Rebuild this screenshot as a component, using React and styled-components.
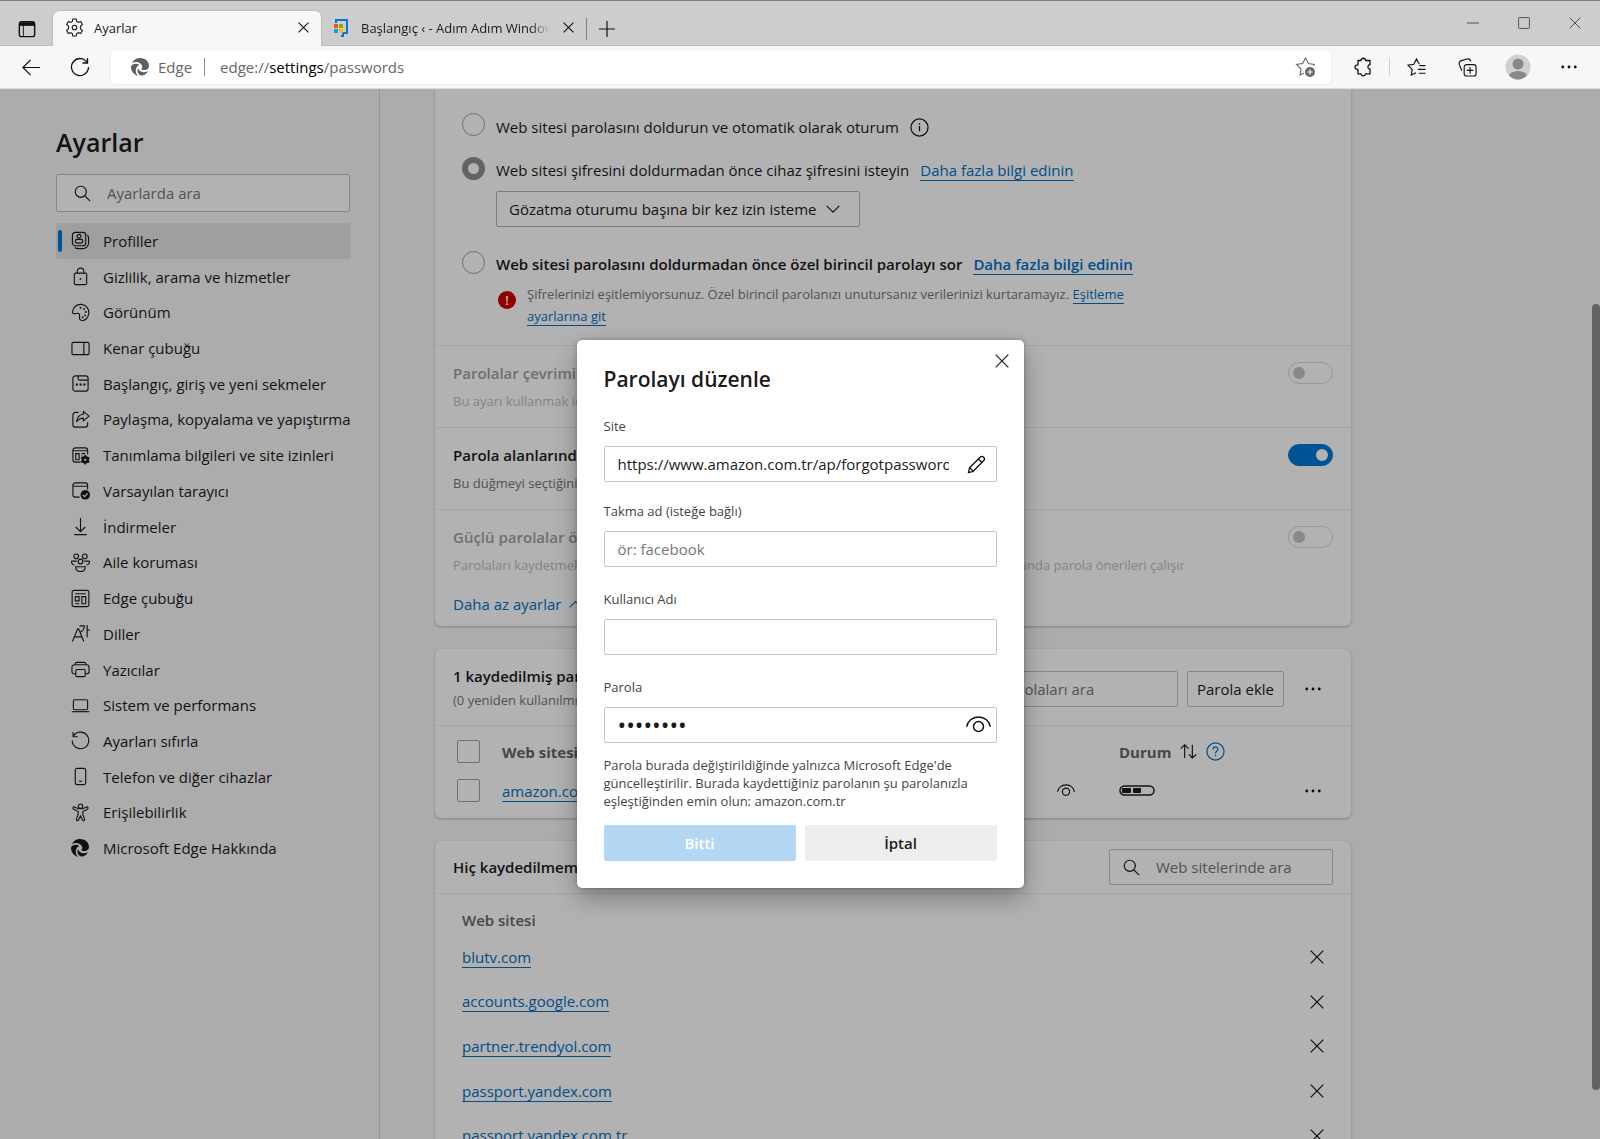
import { useState } from "react";
import styled, { createGlobalStyle, css } from "styled-components";
import { FaEdge } from "react-icons/fa6";

const navItems = [
  { id: "profiles", label: "Profiller" },
  { id: "privacy", label: "Gizlilik, arama ve hizmetler" },
  { id: "appearance", label: "Görünüm" },
  { id: "sidebar", label: "Kenar çubuğu" },
  { id: "start", label: "Başlangıç, giriş ve yeni sekmeler" },
  { id: "share", label: "Paylaşma, kopyalama ve yapıştırma" },
  { id: "cookies", label: "Tanımlama bilgileri ve site izinleri" },
  { id: "browser", label: "Varsayılan tarayıcı" },
  { id: "downloads", label: "İndirmeler" },
  { id: "family", label: "Aile koruması" },
  { id: "edgebar", label: "Edge çubuğu" },
  { id: "languages", label: "Diller" },
  { id: "printers", label: "Yazıcılar" },
  { id: "system", label: "Sistem ve performans" },
  { id: "reset", label: "Ayarları sıfırla" },
  { id: "phone", label: "Telefon ve diğer cihazlar" },
  { id: "accessibility", label: "Erişilebilirlik" },
  { id: "about", label: "Microsoft Edge Hakkında" },
];

const neverSaved = [
  "blutv.com",
  "accounts.google.com",
  "partner.trendyol.com",
  "passport.yandex.com",
  "passport.yandex.com.tr",
];

const navPaths = {
  profiles: (
    <>
      <rect x="1.5" y="1.5" width="14" height="14" rx="3" />
      <circle cx="8.5" cy="5.5" r="2" />
      <rect x="4.5" y="8.8" width="8" height="4" rx="2" />
      <path d="M4 17.3c1 .8 2 1.2 3.500 1.200h5c3.300 0 6-2.700 6-6v-5c0-1.400-.4-2.500-1.200-3.500" />
    </>
  ),
  privacy: (
    <>
      <rect x="3.500" y="6.500" width="13" height="12" rx="1.500" />
      <path d="M6.500 6.500V4.700a3.500 3.500 0 0 1 7 0v1.800" />
      <circle cx="10" cy="12.500" r="1" fill="currentColor" stroke="none" />
    </>
  ),
  appearance: (
    <>
      <path d="M1.500 9.500C2 4.500 6 1 11 1.500c5 .4 8.200 4.500 7.800 9.300-.4 4.700-4 8.200-7.600 7.600-1.800-.3-2.400-1.700-2.200-3.300.3-2 .2-3.300-.9-4-1.400-1-2.800.2-4.200.2-1.500 0-2.600-.6-2.400-1.800z" />
      <g fill="currentColor" stroke="none">
        <circle cx="10" cy="5" r="1" />
        <circle cx="13.700" cy="6.300" r="1" />
        <circle cx="15.500" cy="9.500" r="1" />
        <circle cx="14.800" cy="13" r="1" />
        <circle cx="12.300" cy="15" r="1" />
      </g>
    </>
  ),
  sidebar: (
    <>
      <rect x="1" y="3.500" width="18" height="13" rx="1.500" />
      <path d="M13.500 3.500v13" />
    </>
  ),
  start: (
    <>
      <rect x="2" y="2" width="16" height="16" rx="2.500" />
      <path d="M7.500 2v3c0 .8.400 1.500 1.500 1.500h9" />
      <g fill="currentColor" stroke="none">
        <rect x="5" y="10" width="2.200" height="2.200" />
        <rect x="9" y="10" width="2.200" height="2.200" />
        <rect x="13" y="10" width="2.200" height="2.200" />
      </g>
    </>
  ),
  share: (
    <>
      <path d="M8 2.500H4.500A2.500 2.500 0 0 0 2 5v10.500A2.500 2.500 0 0 0 4.500 18H15a2.500 2.500 0 0 0 2.500-2.500V13" />
      <path d="M13 1.500l6 5-6 5V8.500c-3 0-5 1.200-7 3.700.4-4 3-7.400 7-7.700z" strokeLinejoin="round" />
    </>
  ),
  cookies: (
    <>
      <path d="M17.500 9V4.500A2.500 2.500 0 0 0 15 2H4.500A2.500 2.500 0 0 0 2 4.500v10A2.500 2.500 0 0 0 4.500 17H10M2 5h15.500" />
      <path d="M5 8h3.500v6.500H5zM11 8h4M11 10.500h1" />
      <circle cx="15" cy="14.500" r="2.700" strokeWidth="2.600" />
      <path d="M15 9.500v10M10.700 12l8.600 5M10.700 17l8.600-5" strokeWidth="1.800" />
      <circle cx="15" cy="14.500" r="1.200" fill="#fff" stroke="none" />
    </>
  ),
  browser: (
    <>
      <path d="M17.500 9V4.500A2.500 2.500 0 0 0 15 2H4.500A2.500 2.500 0 0 0 2 4.500v10A2.500 2.500 0 0 0 4.500 17H9M2 5.500h15.500" />
      <circle cx="15" cy="14.500" r="5" fill="currentColor" stroke="none" />
      <path d="M12.500 14.700l1.800 1.700 3.200-3.300" stroke="#fff" />
    </>
  ),
  downloads: <path d="M10 1v14M5 10.500l5 5 5-5M3.500 18.500h13" />,
  family: (
    <>
      <circle cx="5.500" cy="3.500" r="2.500" />
      <circle cx="14.500" cy="3.500" r="2.500" />
      <circle cx="10" cy="9" r="2.500" />
      <path d="M5 14.500h10c0 3-2 5-5 5s-5-2-5-5zM6 8.500H1c-.8 0-.8 3.500 2.500 4.200M14 8.500h5c.8 0 .8 3.500-2.500 4.200" />
    </>
  ),
  edgebar: (
    <>
      <rect x="1.200" y="1.500" width="17.600" height="17" rx="2" />
      <path d="M4.500 5h11M4.500 8h4v4.500h-4zM11.500 8h4v7.500h-4zM4.500 15.500h4" />
    </>
  ),
  languages: (
    <path d="M1.500 18.500L7 5h1l5.500 13.500M3.500 13.500h8M9 2h5c0 3-1.500 5-4 6.500M17 1v13M17 6.500h2.500" />
  ),
  printers: (
    <>
      <path d="M5 14.500H3.500a2.500 2.500 0 0 1-2.500-2.500V7.500A2.500 2.500 0 0 1 3.500 5h13A2.500 2.500 0 0 1 19 7.500V12a2.500 2.500 0 0 1-2.500 2.500H15" />
      <path d="M4.500 5V4A1.500 1.500 0 0 1 6 2.500h8A1.500 1.500 0 0 1 15.500 4v1" />
      <rect x="5" y="10" width="10" height="7.500" rx="1.500" />
    </>
  ),
  system: (
    <>
      <rect x="2.500" y="4" width="15" height="10.500" rx="1.500" />
      <path d="M.8 16.500h18.400" />
    </>
  ),
  reset: (
    <>
      <path d="M2.500 5.500a8.700 8.700 0 1 1-1.200 4.500" />
      <path d="M2.200 1v5h5" />
    </>
  ),
  phone: (
    <>
      <rect x="4.500" y="1.500" width="11" height="17" rx="2" />
      <path d="M8.500 15h3" />
    </>
  ),
  accessibility: (
    <>
      <path d="M3.800 4.200c-1.500-.6-2.500 1.500-1 2.300L7.500 9v3l-1.800 5c-.5 1.600 1.600 2.300 2.200.9L10 13.500l2.100 4.400c.6 1.400 2.700.7 2.200-.9L12.500 12V9l4.700-2.500c1.500-.8.5-2.900-1-2.300L12.500 6h-5z" />
      <circle cx="10" cy="3.300" r="2.300" />
    </>
  ),
};

const Icon = ({ size = 20, width = 1.2, children }) => (
  <svg
    width={size}
    height={size}
    viewBox="0 0 20 20"
    fill="none"
    stroke="currentColor"
    strokeWidth={width}
    aria-hidden="true"
  >
    {children}
  </svg>
);

const CloseIcon = ({ size = 14, width = 1.5 }) => (
  <Icon size={size} width={width}>
    <path d="M1 1l18 18M19 1L1 19" />
  </Icon>
);

const SearchIcon = () => (
  <Icon size={17} width={1.4}>
    <circle cx="8" cy="8" r="6.500" />
    <path d="M12.800 12.800l6.200 6.200" />
  </Icon>
);

const DotsIcon = () => (
  <Icon size={16}>
    <g fill="currentColor" stroke="none">
      <circle cx="2.200" cy="10" r="1.800" />
      <circle cx="10" cy="10" r="1.800" />
      <circle cx="17.800" cy="10" r="1.800" />
    </g>
  </Icon>
);

const EyeIcon = ({ size = 24, width = 1.3 }) => (
  <Icon size={size} width={width}>
    <path d="M.6 11C1.300 6.500 5 3.200 10 3.200s8.700 3.300 9.400 7.800" />
    <circle cx="10" cy="10.800" r="4" />
  </Icon>
);

const SwapIcon = () => (
  <Icon size={17} width={1.3}>
    <path d="M5.500 17.500V2M1 6.500L5.500 2 10 6.500M14.500 2v15.500M10.500 13.500l4 4 4.500-4" />
  </Icon>
);

const GearIcon = () => (
  <Icon size={19} width={1.2}>
    <path
      strokeLinejoin="round"
      d="M8.200 1h3.600l.5 2.600 1.700 1 2.500-.9 1.800 3.100-2 1.700v3l2 1.700-1.800 3.100-2.500-.9-1.700 1-.5 2.600H8.200l-.5-2.600-1.700-1-2.500.9-1.800-3.100 2-1.700v-3l-2-1.700 1.800-3.100 2.500.9 1.700-1z"
    />
    <circle cx="10" cy="10" r="2.400" />
  </Icon>
);

const App = () => {
  const [dialogOpen, setDialogOpen] = useState(true);
  const [reveal, setReveal] = useState(false);
  const [alias, setAlias] = useState("");
  const [username, setUsername] = useState("");
  const [password, setPassword] = useState("12345678");
  const [reauth, setReauth] = useState("device");

  return (
    <Window>
      <GlobalStyle />
      <TabStrip>
        <IconButton $w={53} aria-label="Sekme eylemleri">
          <Icon size={18} width={1.6}>
            <rect x="1.500" y="2" width="17" height="16.500" rx="2.500" />
            <path d="M1.500 4.500h17" strokeWidth="4" />
            <path d="M6 5v13" strokeWidth="1" />
          </Icon>
        </IconButton>
        <Tab $active>
          <GearIcon />
          <TabTitle>Ayarlar</TabTitle>
          <IconButton $w={16} aria-label="Sekmeyi kapat">
            <CloseIcon size={11} width={2} />
          </IconButton>
        </Tab>
        <Tab>
          <svg width="18" height="18" viewBox="0 0 18 18" aria-hidden="true">
            <path d="M3 4V1h11v13h-4v3H8" fill="none" stroke="#0078d4" strokeWidth="2" />
            <rect x="1" y="5" width="4" height="4" fill="#f25022" />
            <rect x="6" y="5" width="4" height="4" fill="#7fba00" />
            <rect x="1" y="10" width="4" height="4" fill="#00a4ef" />
            <rect x="6" y="10" width="4" height="4" fill="#ffb900" />
          </svg>
          <TabTitle $fade>Başlangıç ‹ - Adım Adım Windows</TabTitle>
          <IconButton $w={16} aria-label="Sekmeyi kapat">
            <CloseIcon size={11} width={2} />
          </IconButton>
        </Tab>
        <Separator $color="#7c7c7c" $h={22} />
        <IconButton $w={40} aria-label="Yeni sekme">
          <Icon size={16} width={1.500}>
            <path d="M10 0v20M0 10h20" />
          </Icon>
        </IconButton>
        <WindowControls>
          <IconButton $w={51} aria-label="Simge durumuna küçült">
            <Icon size={12} width={1.500}>
              <path d="M0 10h20" />
            </Icon>
          </IconButton>
          <IconButton $w={51} aria-label="Ekranı kapla">
            <Icon size={12} width={1.500}>
              <rect x="1" y="1" width="18" height="18" rx="1" />
            </Icon>
          </IconButton>
          <IconButton $w={51} aria-label="Kapat">
            <CloseIcon size={12} width={1.500} />
          </IconButton>
        </WindowControls>
      </TabStrip>

      <Toolbar>
        <IconButton $w={44} aria-label="Geri">
          <Icon size={19} width={1.300}>
            <path d="M19 10H1.500M9 2L1 10l8 8" />
          </Icon>
        </IconButton>
        <IconButton $w={54} aria-label="Yenile">
          <Icon size={20} width={1.300}>
            <path d="M17.200 5.500A8.500 8.500 0 1 0 18.500 10" />
            <path d="M17.500 1v5h-5" />
          </Icon>
        </IconButton>
        <AddressBar>
          <FaEdge size={18} color="#5f5f5f" aria-hidden="true" />
          <span>Edge</span>
          <Separator $color="#8a8a8a" $h={18} />
          <Url>
            edge://<b>settings</b>/passwords
          </Url>
          <IconButton $w={28} aria-label="Sık kullanılanlara ekle">
            <Icon size={20} width={1.100}>
              <path stroke="#666" d="M18.500 8.500l1-1-6-.9L10.500 1 7.700 6.600l-6.200.9L6 12l-1 6 4-2" />
              <circle cx="15" cy="15" r="5" fill="#666" stroke="none" />
              <path d="M15 12.300v5.400M12.300 15h5.400" stroke="#fff" />
            </Icon>
          </IconButton>
        </AddressBar>
        <ToolbarActions>
          <IconButton $w={32} aria-label="Uzantılar">
            <Icon size={20} width={1.300}>
              <path d="M5 3.500h3c0-3 4.500-3 4.500 0H17v4.200c-2.500-.4-3 4.600 0 4.200v5h-4.500c.2 2.500-4.700 2.500-4.500 0H5v-4.500c-4 .3-4-4.700 0-4.500z" strokeLinejoin="round" />
            </Icon>
          </IconButton>
          <Separator $color="#cfcfcf" $h={18} />
          <IconButton $w={32} aria-label="Sık kullanılanlar">
            <Icon size={19} width={1.200}>
              <path d="M13 6.500L10 1 7.200 6.600 1 7.500l4.500 4.500-1 6 5-2.500M13 8h6.500M11.500 12h8M12.500 16h7" />
            </Icon>
          </IconButton>
          <IconButton $w={32} aria-label="Koleksiyonlar">
            <Icon size={19} width={1.200}>
              <rect x="6.500" y="7" width="12.500" height="12" rx="2.500" />
              <path d="M12.700 9.500v7M9.200 13h7M4 13.500L1.500 7C.8 5 1.500 3.500 3.500 2.800l6-1.800c2-.5 3.400.3 4 2.500" />
            </Icon>
          </IconButton>
          <IconButton $w={32} aria-label="Profil">
            <svg width="26" height="26" viewBox="0 0 26 26" aria-hidden="true">
              <clipPath id="avatar">
                <circle cx="13" cy="13" r="12.500" />
              </clipPath>
              <g clipPath="url(#avatar)">
                <rect width="26" height="26" fill="#d2d0ce" />
                <circle cx="13" cy="10" r="5.500" fill="#8a8886" />
                <ellipse cx="13" cy="22.500" rx="9" ry="5.500" fill="#8a8886" />
              </g>
            </svg>
          </IconButton>
          <IconButton $w={32} aria-label="Ayarlar ve daha fazlası">
            <DotsIcon />
          </IconButton>
        </ToolbarActions>
      </Toolbar>

      <Page>
        <Sidebar>
          <h1>Ayarlar</h1>
          <SearchBox $h={38}>
            <SearchIcon />
            <input type="search" aria-label="Ayarlarda ara" placeholder="Ayarlarda ara" />
          </SearchBox>
          <Nav>
            {navItems.map((item, i) => (
              <NavLink key={item.id} href={`#${item.id}`} $active={i === 0}>
                {item.id === "about" ? (
                  <FaEdge size={18} aria-hidden="true" />
                ) : (
                  <Icon size={19}>{navPaths[item.id]}</Icon>
                )}
                <span>{item.label}</span>
              </NavLink>
            ))}
          </Nav>
        </Sidebar>

        <Content>
          <Card $top>
            <Options>
              <RadioRow>
                <Radio
                  type="radio"
                  name="reauth"
                  id="auto"
                  checked={reauth === "auto"}
                  onChange={() => setReauth("auto")}
                />
                <RadioLine>
                  <label htmlFor="auto">Web sitesi parolasını doldurun ve otomatik olarak oturum</label>
                  <IconButton $w={20} aria-label="Bilgi">
                    <Icon size={19} width={1.300}>
                      <circle cx="10" cy="10" r="9" />
                      <path d="M10 8.500V14M10 5.500v1.500" />
                    </Icon>
                  </IconButton>
                </RadioLine>
              </RadioRow>
              <RadioRow>
                <Radio
                  type="radio"
                  name="reauth"
                  id="device"
                  checked={reauth === "device"}
                  onChange={() => setReauth("device")}
                />
                <div>
                  <RadioLine>
                    <label htmlFor="device">Web sitesi şifresini doldurmadan önce cihaz şifresini isteyin</label>
                    <Link href="#device-more">Daha fazla bilgi edinin</Link>
                  </RadioLine>
                  <SelectBox>
                    <select aria-label="İzin sıklığı">
                      <option>Gözatma oturumu başına bir kez izin isteme</option>
                    </select>
                    <Icon size={14} width={1.700}>
                      <path d="M1 5.500l9 9 9-9" />
                    </Icon>
                  </SelectBox>
                </div>
              </RadioRow>
              <RadioRow $strong>
                <Radio
                  type="radio"
                  name="reauth"
                  id="custom"
                  checked={reauth === "custom"}
                  onChange={() => setReauth("custom")}
                />
                <div>
                  <RadioLine>
                    <label htmlFor="custom">Web sitesi parolasını doldurmadan önce özel birincil parolayı sor</label>
                    <Link href="#custom-more">Daha fazla bilgi edinin</Link>
                  </RadioLine>
                  <Warning>
                    <Badge>!</Badge>
                    <p>
                      Şifrelerinizi eşitlemiyorsunuz. Özel birincil parolanızı unutursanız verilerinizi
                      kurtaramayız. <Link href="#sync">Eşitleme ayarlarına git</Link>
                    </p>
                  </Warning>
                </div>
              </RadioRow>
            </Options>
            <Setting $disabled>
              <div>
                <label htmlFor="leak">Parolalar çevrimiçi sızıntıda bulunursa uyar</label>
                <p>Bu ayarı kullanmak için oturum açın</p>
              </div>
              <Toggle type="checkbox" id="leak" disabled />
            </Setting>
            <Setting>
              <div>
                <label htmlFor="show">Parola alanlarında göster düğmesi</label>
                <p>Bu düğmeyi seçtiğinizde parola gösterilir</p>
              </div>
              <Toggle type="checkbox" id="show" defaultChecked />
            </Setting>
            <Setting $disabled>
              <div>
                <label htmlFor="suggest">Güçlü parolalar öner</label>
                <p>
                  Parolaları kaydetmek için hem eşitleme hem de parola kaydetmeyi önerme ayarları açık
                  olduğunda parola önerileri çalışır
                </p>
              </div>
              <Toggle type="checkbox" id="suggest" disabled />
            </Setting>
            <LessButton>
              Daha az ayarlar
              <Icon size={13} width={1.700}>
                <path d="M1 14.500l9-9 9 9" />
              </Icon>
            </LessButton>
          </Card>

          <Card>
            <SavedHeader>
              <div>
                <h2>1 kaydedilmiş parola</h2>
                <p>(0 yeniden kullanılmış)</p>
              </div>
              <SearchBox $h={36} $w={224}>
                <SearchIcon />
                <input type="search" aria-label="Parolaları ara" placeholder="Parolaları ara" />
              </SearchBox>
              <AddButton>Parola ekle</AddButton>
              <IconButton $w={40} aria-label="Diğer eylemler">
                <DotsIcon />
              </IconButton>
            </SavedHeader>
            <Table>
              <colgroup>
                <Col $w={67} />
                <col />
                <Col $w={72} />
                <Col $w={174} />
                <Col $w={58} />
              </colgroup>
              <thead>
                <tr>
                  <th>
                    <Checkbox type="checkbox" aria-label="Tümünü seç" />
                  </th>
                  <th scope="col">Web sitesi</th>
                  <th />
                  <th scope="col">
                    <Status>
                      Durum
                      <IconButton $w={18} aria-label="Sırala">
                        <SwapIcon />
                      </IconButton>
                      <IconButton $w={20} $color="#0070c6" aria-label="Yardım">
                        <Icon size={19} width={1.300}>
                          <circle cx="10" cy="10" r="9" />
                          <path d="M7.500 8c0-3.700 5-3.500 5-.5 0 2-2.500 2.300-2.500 4.500M10 13.500V15" />
                        </Icon>
                      </IconButton>
                    </Status>
                  </th>
                  <th />
                </tr>
              </thead>
              <tbody>
                <tr>
                  <td>
                    <Checkbox type="checkbox" aria-label="amazon.com.tr seç" />
                  </td>
                  <td>
                    <Link href="#amazon">amazon.com.tr</Link>
                  </td>
                  <td>
                    <IconButton $w={38} aria-label="Parolayı göster">
                      <EyeIcon size={18} width={1.200} />
                    </IconButton>
                  </td>
                  <td>
                    <svg width="36" height="11" viewBox="0 0 36 11" role="img" aria-label="Orta">
                      <rect x="1" y="1" width="34" height="9" rx="4.500" fill="none" stroke="#1b1b1b" strokeWidth="1.500" />
                      <rect x="3" y="3" width="9" height="5" rx="1" fill="#1b1b1b" />
                      <rect x="14" y="3" width="8" height="5" rx="1" fill="#1b1b1b" />
                    </svg>
                  </td>
                  <td>
                    <IconButton $w={40} aria-label="Diğer eylemler" onClick={() => setDialogOpen(true)}>
                      <DotsIcon />
                    </IconButton>
                  </td>
                </tr>
              </tbody>
            </Table>
          </Card>

          <Card>
            <NeverHeader>
              <h2>Hiç kaydedilmemiş</h2>
              <SearchBox $h={36} $w={224}>
                <SearchIcon />
                <input type="search" aria-label="Web sitelerinde ara" placeholder="Web sitelerinde ara" />
              </SearchBox>
            </NeverHeader>
            <NeverTitle>Web sitesi</NeverTitle>
            <NeverList>
              {neverSaved.map((site) => (
                <li key={site}>
                  <Link href={`#${site}`}>{site}</Link>
                  <IconButton $w={32} aria-label={`${site} kaldır`}>
                    <CloseIcon size={14} width={1.700} />
                  </IconButton>
                </li>
              ))}
            </NeverList>
          </Card>
        </Content>
        <ScrollThumb />

        {dialogOpen && (
          <Overlay>
            <Dialog role="dialog" aria-labelledby="dialog-title">
              <DialogClose aria-label="Kapat" onClick={() => setDialogOpen(false)}>
                <CloseIcon size={14} width={1.700} />
              </DialogClose>
              <h2 id="dialog-title">Parolayı düzenle</h2>
              <Field>
                <label htmlFor="site">Site</label>
                <InputBox>
                  <input id="site" readOnly value="https://www.amazon.com.tr/ap/forgotpassword" />
                  <IconButton $w={38} aria-label="Düzenle">
                    <Icon size={19} width={1.400}>
                      <path d="M1.500 18.500l1.200-5L14 2.200c2.300-2.200 5.800 1.300 3.700 3.600L6.500 17.200zM12 4.200L15.800 8M3 13.500l3.500 3.500" strokeLinejoin="round" />
                    </Icon>
                  </IconButton>
                </InputBox>
              </Field>
              <Field $gap={18}>
                <label htmlFor="alias">Takma ad (isteğe bağlı)</label>
                <InputBox>
                  <input
                    id="alias"
                    placeholder="ör: facebook"
                    value={alias}
                    onChange={(e) => setAlias(e.target.value)}
                  />
                </InputBox>
              </Field>
              <Field $gap={21}>
                <label htmlFor="username">Kullanıcı Adı</label>
                <InputBox>
                  <input id="username" value={username} onChange={(e) => setUsername(e.target.value)} />
                </InputBox>
              </Field>
              <Field $gap={21}>
                <label htmlFor="password">Parola</label>
                <InputBox>
                  <input
                    id="password"
                    type={reveal ? "text" : "password"}
                    value={password}
                    onChange={(e) => setPassword(e.target.value)}
                  />
                  <IconButton $w={34} aria-label="Parolayı göster" onClick={() => setReveal(!reveal)}>
                    <EyeIcon size={25} width={1.200} />
                  </IconButton>
                </InputBox>
              </Field>
              <Hint>
                Parola burada değiştirildiğinde yalnızca Microsoft Edge'de güncelleştirilir. Burada
                kaydettiğiniz parolanın şu parolanızla eşleştiğinden emin olun: amazon.com.tr
              </Hint>
              <Buttons>
                <DialogButton $primary disabled>
                  Bitti
                </DialogButton>
                <DialogButton onClick={() => setDialogOpen(false)}>İptal</DialogButton>
              </Buttons>
            </Dialog>
          </Overlay>
        )}
      </Page>
    </Window>
  );
};

export default App;

const GlobalStyle = createGlobalStyle`
  * {
    box-sizing: border-box;
  }

  body {
    margin: 0;
    overflow: hidden;
  }

  body, button, input, select {
    font-family: "Open Sans", "Noto Sans", sans-serif;
    font-size: 15px;
    line-height: 22px;
    color: #1b1b1b;
  }

  h1, h2, p, ul {
    margin: 0;
    padding: 0;
  }
`;

const Window = styled.div`
  display: flex;
  flex-direction: column;
  height: 100vh;
  background: #f7f7f7;
`;

const IconButton = styled.button`
  display: flex;
  flex: none;
  align-items: center;
  justify-content: center;
  width: ${(p) => p.$w}px;
  height: 24px;
  padding: 0;
  border: none;
  background: none;
  color: ${(p) => p.$color || "#111"};
  cursor: pointer;
`;

const Separator = styled.div`
  flex: none;
  width: 1px;
  height: ${(p) => p.$h}px;
  background: ${(p) => p.$color};
`;

const TabStrip = styled.div`
  display: flex;
  align-items: center;
  height: 46px;
  padding-top: 10px;
  border-top: 1px solid #7f7f7f;
  background: #cdcdcd;
  box-shadow: inset 0 -1px 0 #bdbdbd;
`;

const Tab = styled.div`
  display: flex;
  align-items: center;
  gap: 10px;
  width: ${(p) => (p.$active ? 268 : 265)}px;
  height: 100%;
  padding: 0 10px 2px 12px;
  border-radius: 6px 6px 0 0;
  ${(p) =>
    p.$active &&
    css`
      background: #f7f7f7;
      box-shadow: 0 0 2px rgba(0, 0, 0, 0.25);
      clip-path: inset(-3px -3px 0 -3px);
    `}
`;

const TabTitle = styled.span`
  flex: 1;
  overflow: hidden;
  font-size: 13px;
  white-space: nowrap;
  ${(p) => p.$fade && "mask-image: linear-gradient(to right, #000 90%, transparent);"}
`;

const WindowControls = styled.div`
  display: flex;
  align-self: flex-start;
  margin-left: auto;

  button {
    color: #444;
  }
`;

const Toolbar = styled.div`
  display: flex;
  align-items: center;
  height: 43px;
  padding: 0 15px 0 9px;
  border-bottom: 1px solid #dcdcdc;
  background: #f7f7f7;
`;

const AddressBar = styled.div`
  display: flex;
  flex: 1;
  align-items: center;
  gap: 12px;
  height: 34px;
  margin-left: 4px;
  padding: 0 12px 0 20px;
  border-radius: 5px;
  background: #fff;
  box-shadow: 0 0 3px rgba(0, 0, 0, 0.08);
  color: #666;

  span {
    margin-left: -3px;
  }
`;

const Url = styled.div`
  flex: 1;
  margin-left: 3px;

  b {
    font-weight: 400;
    color: #000;
  }
`;

const ToolbarActions = styled.div`
  display: flex;
  align-items: center;
  gap: 19px;
  margin-left: 16px;

  ${Separator} {
    margin: 0 -9px;
  }
`;

const Page = styled.div`
  position: relative;
  display: flex;
  flex: 1;
  min-height: 0;
  overflow: hidden;
`;

const Sidebar = styled.aside`
  flex: none;
  width: 380px;
  padding: 35px 29px 0 56px;
  border-right: 1px solid #d6d6d6;

  h1 {
    margin-bottom: 14px;
    font-size: 25px;
    font-weight: 600;
    line-height: 36px;
  }
`;

const SearchBox = styled.div`
  display: flex;
  align-items: center;
  flex: none;
  gap: 16px;
  width: ${(p) => (p.$w ? `${p.$w}px` : "100%")};
  height: ${(p) => p.$h}px;
  padding: 0 12px 0 ${(p) => (p.$w ? 13 : 17)}px;
  border: 1px solid #c2c2c2;
  border-radius: 2px;
  background: #fff;

  svg {
    flex: none;
  }

  input {
    flex: 1;
    min-width: 0;
    padding: 0;
    border: none;
    outline: none;
    background: none;
  }

  input::placeholder {
    color: #767676;
  }
`;

const Nav = styled.nav`
  display: grid;
  grid-auto-rows: 1fr;
  min-height: 643px;
  margin-top: 11px;
`;

const NavLink = styled.a`
  display: grid;
  grid-template-columns: 4px 20px 1fr;
  align-items: center;
  column-gap: 8px;
  padding-left: 2px;
  border-radius: 3px;
  color: inherit;
  text-decoration: none;
  white-space: nowrap;
  background: ${(p) => (p.$active ? "#e4e4e4" : "none")};

  &::before {
    content: "";
    width: 4px;
    height: 22px;
    border-radius: 2px;
    background: ${(p) => (p.$active ? "#0078d4" : "none")};
  }

  svg {
    justify-self: center;
  }

  span {
    padding-left: 5px;
  }
`;

const Content = styled.main`
  flex: 1;
  display: flex;
  flex-direction: column;
  gap: 23px;
  max-width: 971px;
  padding: 0 0 0 55px;
`;

const Card = styled.section`
  flex: none;
  border-radius: ${(p) => (p.$top ? "0 0 6px 6px" : "6px")};
  background: #fff;
  box-shadow: 0 1px 3px rgba(0, 0, 0, 0.25);

  h2 {
    font-size: 15px;
    font-weight: 600;
    line-height: 22px;
  }
`;

const Options = styled.div`
  display: flex;
  flex-direction: column;
  gap: 18px;
  padding: 24px 27px 18px;
`;

const RadioRow = styled.div`
  display: flex;
  align-items: flex-start;
  gap: 11px;
  font-weight: ${(p) => (p.$strong ? 600 : 400)};
`;

const Radio = styled.input`
  appearance: none;
  flex: none;
  width: 23px;
  height: 23px;
  margin: 0;
  border: 1px solid #a0a0a0;
  border-radius: 50%;

  &:checked {
    border: 6px solid #8f8f8f;
  }
`;

const RadioLine = styled.div`
  display: flex;
  align-items: center;
  gap: 11px;
  padding-top: 2px;
  white-space: nowrap;
`;

const Link = styled.a`
  border-bottom: 1px solid currentColor;
  color: #0070c6;
  line-height: 20px;
  text-decoration: none;
`;

const SelectBox = styled.div`
  display: inline-grid;
  align-items: center;
  grid-template-columns: 1fr 34px;
  margin: 10px 0 6px;

  select {
    grid-area: 1 / 1 / 2 / 3;
    appearance: none;
    height: 36px;
    padding: 0 42px 0 12px;
    border: 1px solid #b4b4b4;
    border-radius: 2px;
    background: #fff;
  }

  svg {
    grid-area: 1 / 2;
    pointer-events: none;
  }
`;

const Warning = styled.div`
  display: flex;
  gap: 11px;
  max-width: 640px;
  margin-top: 8px;
  padding-left: 2px;
  font-size: 13px;
  font-weight: 400;
  color: #767676;
`;

const Badge = styled.span`
  flex: none;
  width: 18px;
  height: 18px;
  margin-top: 8px;
  border-radius: 50%;
  background: #d00000;
  color: #fff;
  font-size: 13px;
  font-weight: 600;
  line-height: 18px;
  text-align: center;
`;

const Setting = styled.div`
  display: flex;
  justify-content: space-between;
  align-items: flex-start;
  padding: 16px 18px 15px;
  border-top: 1px solid #ebebeb;

  label {
    font-weight: 600;
    color: ${(p) => (p.$disabled ? "#a0a0a0" : "#1b1b1b")};
  }

  p {
    margin-top: 6px;
    font-size: 13px;
    color: ${(p) => (p.$disabled ? "#bdbdbd" : "#767676")};
  }
`;

const Toggle = styled.input`
  appearance: none;
  display: flex;
  align-items: center;
  flex: none;
  width: 45px;
  height: 22px;
  margin: 0;
  padding: 0 4px;
  border: 1px solid #d8d8d8;
  border-radius: 11px;

  &::before {
    content: "";
    width: 12px;
    height: 12px;
    border-radius: 50%;
    background: #c4c4c4;
  }

  &:checked {
    justify-content: flex-end;
    border-color: #0078d4;
    background: #0078d4;
  }

  &:checked::before {
    background: #fff;
  }
`;

const LessButton = styled.button`
  display: flex;
  align-items: center;
  gap: 8px;
  padding: 2px 18px 10px;
  border: none;
  background: none;
  color: #0070c6;
  line-height: 23px;
`;

const SavedHeader = styled.div`
  display: flex;
  align-items: center;
  gap: 9px;
  min-height: 76px;
  padding: 3px 18px 0;

  > div:first-child {
    flex: 1;
    padding-bottom: 2px;
  }

  p {
    margin-top: 2px;
    font-size: 13px;
    color: #767676;
  }
`;

const AddButton = styled.button`
  height: 36px;
  padding: 0 9px;
  border: 1px solid #c2c2c2;
  border-radius: 2px;
  background: #fff;
`;

const Col = styled.col`
  width: ${(p) => p.$w}px;
`;

const Table = styled.table`
  display: table;
  width: 100%;
  padding: 6px 0 8px;
  border-top: 1px solid #ebebeb;
  border-spacing: 0;
  table-layout: fixed;

  th, td {
    height: 39px;
    padding: 0;
    text-align: left;
    vertical-align: middle;
  }

  th {
    font-weight: 700;
    color: #666;
  }

  td:first-child, th:first-child {
    padding-left: 22px;
  }

  svg {
    display: block;
  }
`;

const Checkbox = styled.input`
  appearance: none;
  display: block;
  width: 23px;
  height: 23px;
  margin: 0;
  border: 1px solid #a0a0a0;
  border-radius: 2px;
`;

const Status = styled.div`
  display: flex;
  align-items: center;
  gap: 8px;
`;

const NeverHeader = styled.div`
  display: flex;
  align-items: center;
  justify-content: space-between;
  padding: 8px 18px;
  border-bottom: 1px solid #ebebeb;
`;

const NeverTitle = styled.h3`
  margin: 0;
  padding: 15px 27px 4px;
  font-size: 15px;
  font-weight: 600;
  color: #666;
`;

const NeverList = styled.ul`
  display: grid;
  grid-auto-rows: 1fr;
  min-height: 223px;
  padding: 0 18px 0 27px;
  list-style: none;

  li {
    display: flex;
    align-items: center;
    justify-content: space-between;
  }
`;

const ScrollThumb = styled.div`
  position: absolute;
  top: 215px;
  right: 0;
  bottom: 49px;
  width: 8px;
  border-radius: 4px;
  background: #8d8d8d;
`;

const Overlay = styled.div`
  position: absolute;
  inset: 0;
  display: flex;
  align-items: center;
  justify-content: center;
  background: rgba(0, 0, 0, 0.3);
`;

const Dialog = styled.div`
  position: relative;
  width: 447px;
  padding: 27px;
  border-radius: 5px;
  background: #fff;
  box-shadow: 0 10px 24px rgba(0, 0, 0, 0.3), 0 0 4px rgba(0, 0, 0, 0.25);

  h2 {
    margin-bottom: 23px;
    font-size: 21px;
    font-weight: 600;
    line-height: 25px;
  }
`;

const DialogClose = styled.button`
  position: absolute;
  top: 8px;
  right: 9px;
  display: flex;
  align-items: center;
  justify-content: center;
  width: 26px;
  height: 26px;
  padding: 0;
  border: none;
  background: none;
`;

const Field = styled.div`
  margin-top: ${(p) => p.$gap || 0}px;

  label {
    display: block;
    margin-bottom: 9px;
    font-size: 13px;
    color: #444;
  }
`;

const InputBox = styled.div`
  display: flex;
  align-items: center;
  height: 36px;
  padding-left: 13px;
  border: 1px solid #c5c5c5;
  border-radius: 2px;

  input {
    flex: 1;
    min-width: 0;
    padding: 0;
    border: none;
    outline: none;
    background: none;
  }

  input::placeholder {
    color: #767676;
  }

  input[type="password"] {
    font-size: 23px;
  }

  input + button {
    margin-left: 9px;
  }
`;

const Hint = styled.p`
  margin-top: 13px;
  font-size: 13px;
  line-height: 18px;
  color: #444;
`;

const Buttons = styled.div`
  display: grid;
  grid-template-columns: 1fr 1fr;
  gap: 9px;
  margin-top: 15px;
`;

const DialogButton = styled.button`
  height: 36px;
  border: none;
  border-radius: 2px;
  font-weight: 600;
  background: ${(p) => (p.$primary ? "#b3d6f2" : "#ededed")};
  color: ${(p) => (p.$primary ? "#fff" : "#1b1b1b")};
`;
